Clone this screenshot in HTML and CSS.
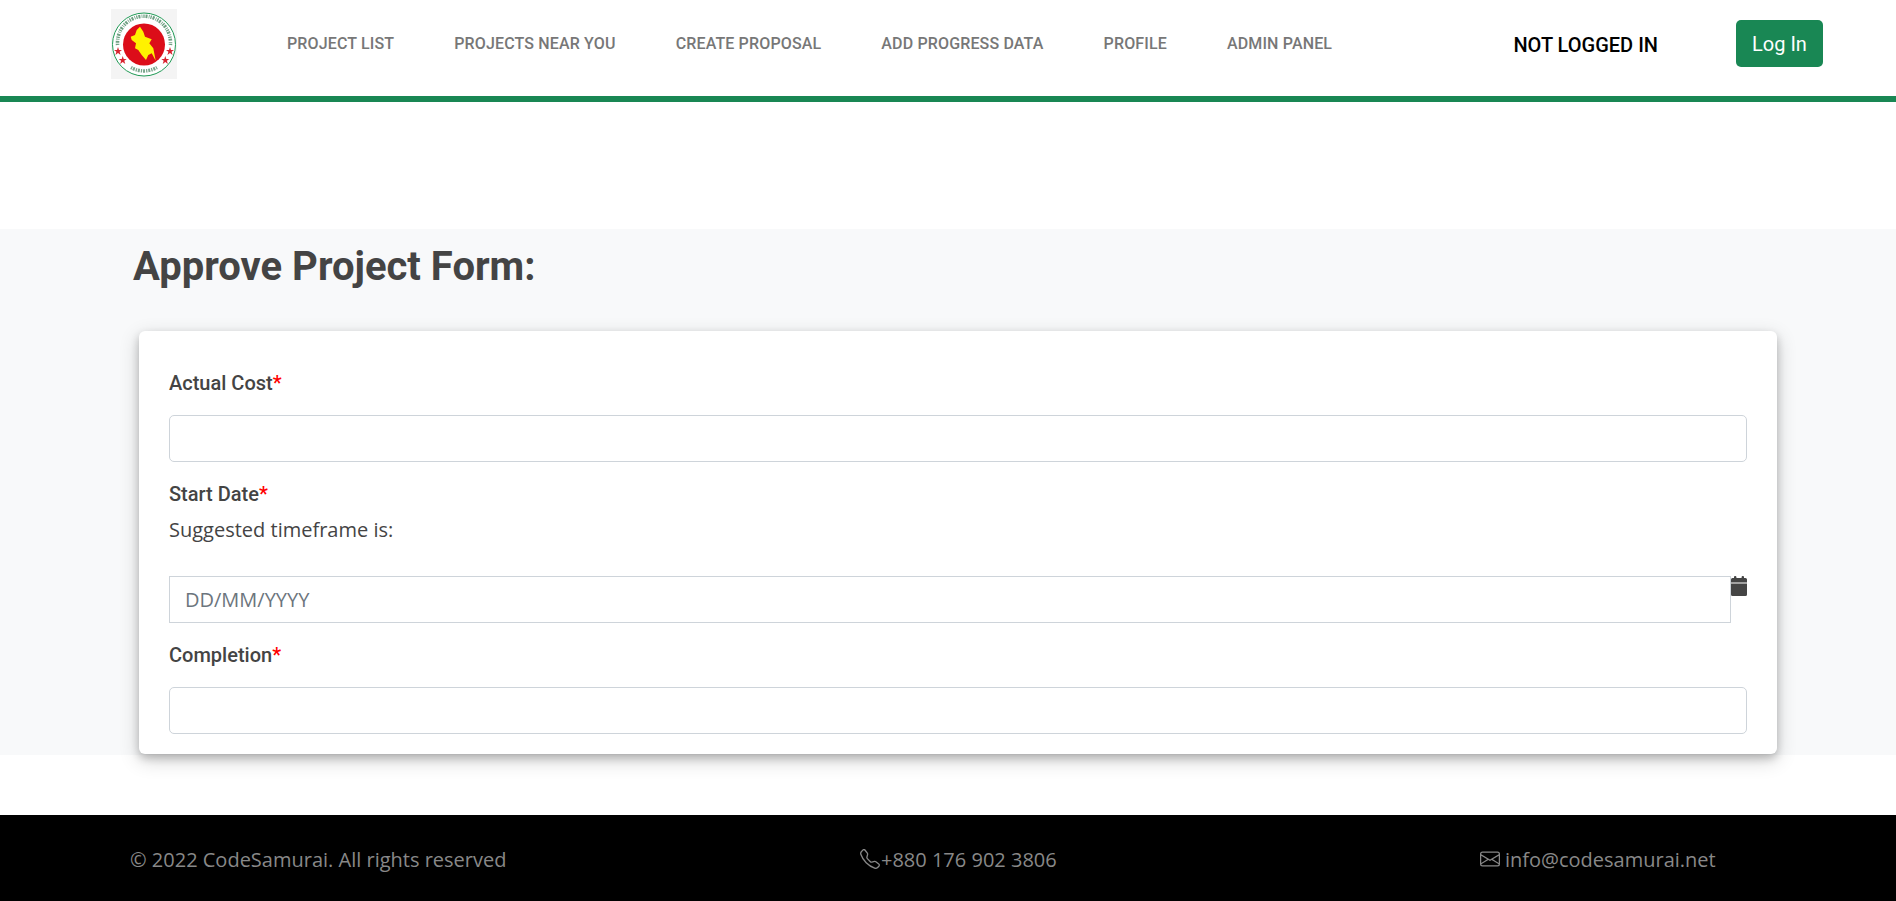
FILE: index.html
```html
<!DOCTYPE html>
<html lang="en">
<head>
<meta charset="utf-8">
<title>Approve Project Form</title>
<link rel="stylesheet" href="styles.css">
</head>
<body>
<header class="topbar">
  <svg class="logo" viewBox="0 0 66 70" width="66" height="70" aria-label="Government of Bangladesh seal">
    <rect width="66" height="70" fill="#f4f4f4"/>
    <circle cx="33" cy="35.5" r="31.500" fill="#fff" stroke="#1f9a55" stroke-width="1"/>
    <path d="M6.6 36 A26.500 26.500 0 1 1 59.400 36" fill="none" stroke="#6f9f82" stroke-width="3.600" stroke-dasharray="1.300 .9 2 1.200 .8 1"/>
    <path d="M20 58.500 A26.500 26.500 0 0 0 46 58.500" fill="none" stroke="#7aa68c" stroke-width="3.500" stroke-dasharray="1.300 .9 2 1"/>
    <circle cx="33" cy="35.5" r="21" fill="#dc0d19"/>
    <path fill="#fff200" d="M29 17.7 32.3 22.7 34 27.7 40.7 30.3 38.3 34.3 42.3 39.3 44.7 51.7 40.7 44.3 37.3 46 35 51 30.7 46 27.3 41 24 39.3 25 34.3 20.7 31 19.7 27.7 24 26 25.7 21Z"/>
    <g fill="#d8232f">
      <polygon points="7,38 8,41 11,41 8.6,42.8 9.6,46 7,44 4.4,46 5.4,42.8 3,41 6,41"/>
      <polygon points="11.7,47 12.7,50 15.7,50 13.300,51.800 14.300,55 11.700,53 9.100,55 10.100,51.800 7.700,50 10.700,50"/>
      <polygon points="59,38 60,41 63,41 60.6,42.8 61.6,46 59,44 56.4,46 57.4,42.8 55,41 58,41"/>
      <polygon points="54.3,47 55.3,50 58.3,50 55.900,51.800 56.900,55 54.300,53 51.700,55 52.700,51.800 50.300,50 53.300,50"/>
    </g>
  </svg>
  <nav class="nav">
    <a class="nav-link">Project List</a>
    <a class="nav-link">Projects Near You</a>
    <a class="nav-link">Create Proposal</a>
    <a class="nav-link">Add Progress Data</a>
    <a class="nav-link">Profile</a>
    <a class="nav-link">Admin Panel</a>
  </nav>
  <span class="status">NOT LOGGED IN</span>
  <button class="login" type="button">Log In</button>
</header>

<main class="content">
  <h1 class="title">Approve Project Form:</h1>
  <form class="card">
    <label class="label">Actual Cost<span class="req">*</span></label>
    <input class="field" type="text">
    <label class="label label-next">Start Date<span class="req">*</span></label>
    <p class="hint">Suggested timeframe is:</p>
    <div class="date-row">
      <input class="field date" type="text" placeholder="DD/MM/YYYY">
      <svg class="cal" viewBox="0 0 16 20" width="16" height="20" aria-hidden="true">
        <rect x="3" y="0" width="2.4" height="4" rx="1" fill="#444"/>
        <rect x="10.6" y="0" width="2.4" height="4" rx="1" fill="#444"/>
        <path fill="#444" d="M1.5 2H14.5A1.5 1.5 0 0 1 16 3.5V6.500H0V3.500A1.500 1.500 0 0 1 1.500 2ZM0 7.500H16V18.500A1.500 1.500 0 0 1 14.500 20H1.500A1.500 1.500 0 0 1 0 18.500Z"/>
      </svg>
    </div>
    <label class="label">Completion<span class="req">*</span></label>
    <input class="field" type="text">
  </form>
</main>

<footer class="footer">
  <span class="foot-item">© 2022 CodeSamurai. All rights reserved</span>
  <span class="foot-item">
    <svg class="foot-icon" viewBox="0 0 16 16" width="20" height="20" aria-hidden="true"><path fill="currentColor" d="M3.654 1.328a.678.678 0 0 0-1.015-.063L1.605 2.3c-.483.484-.661 1.169-.45 1.77a17.568 17.568 0 0 0 4.168 6.608 17.569 17.569 0 0 0 6.608 4.168c.601.211 1.286.033 1.77-.45l1.034-1.034a.678.678 0 0 0-.063-1.015l-2.307-1.794a.678.678 0 0 0-.58-.122l-2.19.547a1.745 1.745 0 0 1-1.657-.459L5.482 8.062a1.745 1.745 0 0 1-.46-1.657l.548-2.19a.678.678 0 0 0-.122-.58L3.654 1.328zM1.884.511a1.745 1.745 0 0 1 2.612.163L6.29 2.98c.329.423.445.974.315 1.494l-.547 2.19a.678.678 0 0 0 .178.643l2.457 2.457a.678.678 0 0 0 .644.178l2.189-.547a1.745 1.745 0 0 1 1.494.315l2.306 1.794c.829.645.905 1.87.163 2.611l-1.034 1.034c-.74.74-1.846 1.065-2.877.702a18.634 18.634 0 0 1-7.01-4.42 18.634 18.634 0 0 1-4.42-7.009c-.362-1.03-.037-2.137.703-2.877L1.885.511z"/></svg>+880 176 902 3806
  </span>
  <span class="foot-item">
    <svg class="foot-icon mail" viewBox="0 0 16 16" width="20" height="20" aria-hidden="true"><path fill="currentColor" d="M0 4a2 2 0 0 1 2-2h12a2 2 0 0 1 2 2v8a2 2 0 0 1-2 2H2a2 2 0 0 1-2-2V4Zm2-1a1 1 0 0 0-1 1v.217l7 4.2 7-4.2V4a1 1 0 0 0-1-1H2Zm13 2.383-4.708 2.825L15 11.105V5.383Zm-.034 6.876-5.64-3.471L8 9.583l-1.326-.795-5.64 3.47A1 1 0 0 0 2 13h12a1 1 0 0 0 .966-.741ZM1 11.105l4.708-2.897L1 5.383v5.722Z"/></svg>info@codesamurai.net
  </span>
</footer>
</body>
</html>
```

FILE: styles.css
```css
* { box-sizing: border-box; }

body {
  margin: 0;
  background: #fff;
  font-family: "Open Sans", sans-serif;
  color: #444;
}

.topbar {
  display: flex;
  align-items: center;
  height: 102px;
  padding: 0 73px 6px 111px;
  border-bottom: 6px solid #198754;
  background: #fff;
}

.logo { flex: none; margin-top: -2px; }

.nav {
  display: flex;
  margin-left: 80px;
  margin-top: -3px;
}

.nav-link {
  padding: 0 30px;
  font: 500 16px/24px Roboto, sans-serif;
  letter-spacing: .15px;
  text-transform: uppercase;
  color: #777;
}

.status {
  margin-left: auto;
  margin-right: 78px;
  margin-top: -1px;
  font: 500 20px/24px Roboto, sans-serif;
  color: #000;
}

.login {
  width: 87px;
  height: 47px;
  margin-top: -3px;
  border: 0;
  border-radius: 5px;
  background: #198754;
  color: #fff;
  font: 400 20px/24px Roboto, sans-serif;
}

.content {
  height: 526px;
  margin-top: 127px;
  padding-top: 13px;
  background: #f8f9fa;
}

.title {
  margin: 0 0 40px 133px;
  font: 700 40px/49px Roboto, sans-serif;
  color: #444;
}

.card {
  display: flex;
  flex-direction: column;
  width: 1638px;
  height: 423px;
  margin-left: 139px;
  padding: 40px 30px 21px;
  border-radius: 6px;
  background: #fff;
  box-shadow: 0 4px 8px 0 rgba(0, 0, 0, .2), 0 6px 20px 0 rgba(0, 0, 0, .19);
}

.label {
  margin-bottom: 20px;
  font: 500 20px/24px Roboto, sans-serif;
  color: #444;
}

.label-next { margin-top: 20px; margin-bottom: 10px; }

.req { color: #f00; }

.hint {
  margin: 0 0 33px;
  font: 400 20px/27px "Open Sans", sans-serif;
  color: #444;
}

.field {
  display: block;
  width: 100%;
  height: 47px;
  flex: none;
  padding: 6px 15px;
  border: 1px solid #ced4da;
  border-radius: 5px;
  background: #fff;
  font: 400 20px/27px "Open Sans", sans-serif;
  color: #444;
}

.field::placeholder { color: #6c757d; opacity: 1; }

.date-row {
  display: flex;
  align-items: flex-start;
  margin-bottom: 20px;
}

.date {
  flex: 1;
  width: auto;
  border-radius: 0;
}

.cal { flex: none; margin-top: 0; }

.footer {
  display: grid;
  grid-template-columns: 730px 620px auto;
  align-items: center;
  height: 86px;
  margin-top: 60px;
  padding: 2px 0 0 130px;
  background: #000;
  color: #888;
}

.foot-item {
  display: flex;
  align-items: center;
  font: 400 20px/27px "Open Sans", sans-serif;
}

.foot-icon { flex: none; margin-right: 1px; }
.mail { margin-right: 5px; }
```
